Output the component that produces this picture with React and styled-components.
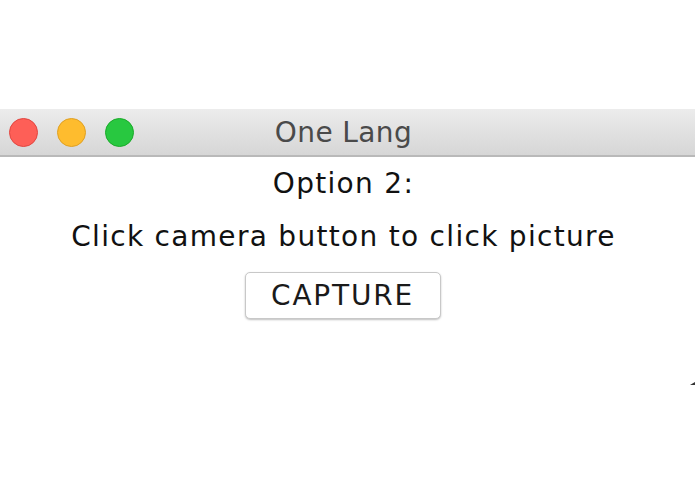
import React from "react";
import styled, { createGlobalStyle } from "styled-components";

const Global = createGlobalStyle`
  html, body { margin: 0; padding: 0; background: #fff; overflow: hidden; }
  body { font-family: "DejaVu Sans", "Liberation Sans", sans-serif; }
`;

const Page = styled.div`
  width: 695px;
  height: 494px;
  background: #fff;
  padding-top: 109px;
  box-sizing: border-box;
  position: relative;
`;

const TitleBar = styled.div`
  height: 46px;
  background: linear-gradient(#ececec, #d6d6d6);
  border-bottom: 2px solid #b9b9b9;
  display: flex;
  align-items: center;
  position: relative;
`;

const Lights = styled.div`
  display: flex;
  gap: 19px;
  padding-left: 9px;
`;

const Light = styled.span`
  width: 29px;
  height: 29px;
  border-radius: 50%;
  box-sizing: border-box;
  background: ${(p) => p.$fill};
  border: 1px solid ${(p) => p.$edge};
`;

const Title = styled.div`
  position: absolute;
  left: 0;
  right: 8px;
  text-align: center;
  font-size: 28px;
  letter-spacing: 0.4px;
  color: #4a4a4a;
  pointer-events: none;
`;

const Body = styled.div`
  display: flex;
  flex-direction: column;
  align-items: center;
  padding-top: 11px;
  padding-right: 8px;
  color: #111;
`;

const Line = styled.div`
  font-size: 28px;
  line-height: 32px;
  letter-spacing: 1.3px;
  margin-bottom: ${(p) => p.$gap}px;
`;

const Button = styled.button`
  width: 196px;
  height: 47px;
  margin-right: 2px;
  background: #fff;
  border: 1px solid #c8c8c8;
  border-radius: 5px;
  box-shadow: 0 1px 2px rgba(0, 0, 0, 0.25);
  font-family: "DejaVu Sans", "Liberation Sans", sans-serif;
  font-size: 28px;
  letter-spacing: 1.8px;
  color: #1a1a1a;
  padding: 0;
`;

const Corner = styled.span`
  position: absolute;
  right: 0;
  top: 382px;
  width: 0;
  height: 0;
  border-left: 5px solid transparent;
  border-bottom: 3px solid #333;
`;

export default function App() {
  return (
    <>
      <Global />
      <Page>
        <TitleBar>
          <Lights>
            <Light $fill="#fe5f57" $edge="#e14640" />
            <Light $fill="#febc2e" $edge="#dfa023" />
            <Light $fill="#28c840" $edge="#1aab29" />
          </Lights>
          <Title>One Lang</Title>
        </TitleBar>
        <Body>
          <Line $gap={21}>Option 2:</Line>
          <Line $gap={19}>Click camera button to click picture</Line>
          <Button>CAPTURE</Button>
        </Body>
        <Corner />
      </Page>
    </>
  );
}
